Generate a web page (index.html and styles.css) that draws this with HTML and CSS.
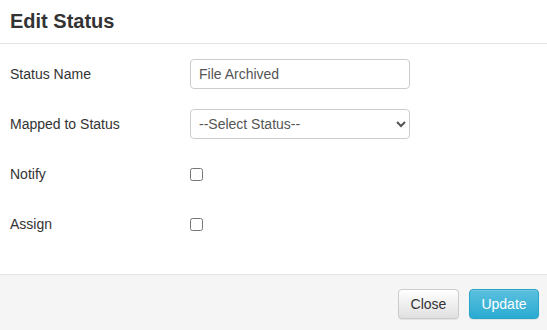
FILE: index.html
```html
<!DOCTYPE html>
<html>
<head lang="en">
    <meta charset="UTF-8">
    <title>Edit Status</title>
    <link rel="stylesheet" href="styles.css">
</head>
<body>
<div class="modal">
    <!--标题-->
    <div class="modal-header">
        <h4 class="modal-title">Edit Status</h4>
    </div>
    <div class="modal-body">
        <div class="form-group">
            <label class="control-label">Status Name</label>
            <input type="text" class="form-control" value="File Archived">
        </div>
        <div class="form-group">
            <label class="control-label">Mapped to Status</label>
            <select class="form-control">
                <option>--Select Status--</option>
            </select>
        </div>
        <div class="form-group">
            <label class="control-label">Notify</label>
            <input type="checkbox" class="check">
        </div>
        <div class="form-group">
            <label class="control-label">Assign</label>
            <input type="checkbox" class="check">
        </div>
    </div>
    <!--按钮-->
    <div class="modal-footer">
        <button class="btn btn-default">Close</button>
        <button class="btn btn-info">Update</button>
    </div>
</div>
</body>
</html>
```

FILE: styles.css
```css
body{
    margin: 0;
    font-family: "Liberation Sans", Arial, sans-serif;
    font-size: 14px;
    color: #333;
    background-color: #fff;
}
.modal{
    width: 547px;
    height: 330px;
    display: flex;
    flex-direction: column;
}
.modal-header{
    height: 44px;
    padding: 0 10px;
    border-bottom: 1px solid #e5e5e5;
    display: flex;
    align-items: center;
    box-sizing: border-box;
}
.modal-title{
    margin: 0;
    font-size: 20px;
    font-weight: bold;
    color: #333;
}
.modal-body{
    padding: 15px 10px 15px 10px;
}
.form-group{
    display: flex;
    align-items: center;
    height: 30px;
    margin-bottom: 20px;
}
.control-label{
    width: 180px;
    flex-shrink: 0;
}
.form-control{
    width: 220px;
    height: 30px;
    box-sizing: border-box;
    padding: 4px 8px;
    border: 1px solid #ccc;
    border-radius: 4px;
    font-family: "Liberation Sans", Arial, sans-serif;
    font-size: 14px;
    color: #555;
    background-color: #fff;
}
select.form-control{
    padding: 4px 4px;
}
.check{
    margin: 0;
    width: 13px;
    height: 13px;
}
.modal-footer{
    flex: 1;
    background-color: #f5f5f5;
    border-top: 1px solid #e5e5e5;
    display: flex;
    justify-content: flex-end;
    align-items: flex-start;
    gap: 10px;
    padding: 14px 8px 0 0;
}
.btn{
    height: 30px;
    padding: 0 10px;
    border-radius: 4px;
    font-family: "Liberation Sans", Arial, sans-serif;
    font-size: 14px;
    cursor: pointer;
}
.btn-default{
    width: 61px;
    color: #333;
    border: 1px solid #ccc;
    background-image: linear-gradient(#fff 0%, #e0e0e0 100%);
    box-shadow: inset 0 1px 0 rgba(255,255,255,.15), 0 1px 1px rgba(0,0,0,.075);
}
.btn-info{
    width: 70px;
    color: #fff;
    border: 1px solid #28a4c9;
    background-image: linear-gradient(#5bc0de 0%, #2aabd2 100%);
    box-shadow: inset 0 1px 0 rgba(255,255,255,.15), 0 1px 1px rgba(0,0,0,.075);
}
```
